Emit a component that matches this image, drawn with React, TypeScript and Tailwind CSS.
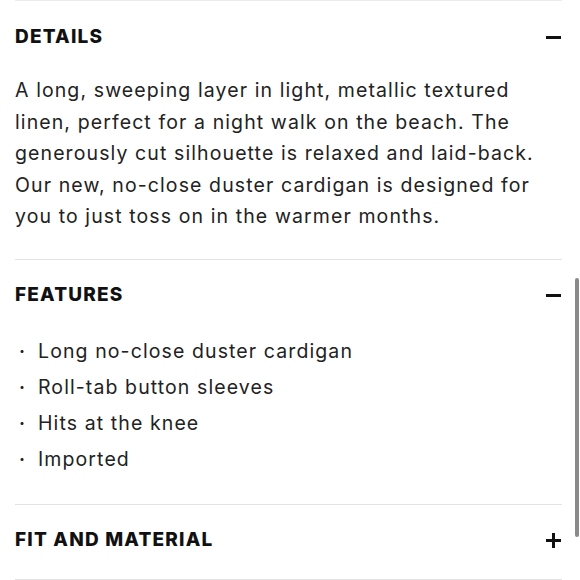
import React from "react";

function Minus() {
  return (
    <svg width="17" height="17" viewBox="0 0 17 17" className="text-[#111]">
      <rect x="1" y="7" width="15" height="3" fill="currentColor" />
    </svg>
  );
}

function Plus() {
  return (
    <svg width="17" height="17" viewBox="0 0 17 17" className="text-[#111]">
      <rect x="1" y="7" width="15" height="3" fill="currentColor" />
      <rect x="7" y="1" width="3" height="15" fill="currentColor" />
    </svg>
  );
}

function Header({ title, open }: { title: string; open: boolean }) {
  return (
    <div className="flex h-[74px] items-center justify-between pb-[2px]">
      <h2 className="text-[19px] font-extrabold tracking-[1.2px] text-[#111]">{title}</h2>
      {open ? <Minus /> : <Plus />}
    </div>
  );
}

const detailLines = [
  "A long, sweeping layer in light, metallic textured",
  "linen, perfect for a night walk on the beach. The",
  "generously cut silhouette is relaxed and laid-back.",
  "Our new, no-close duster cardigan is designed for",
  "you to just toss on in the warmer months.",
];

const features = [
  "Long no-close duster cardigan",
  "Roll-tab button sleeves",
  "Hits at the knee",
  "Imported",
];

export default function App() {
  return (
    <div
      className="relative h-[580px] w-[580px] overflow-hidden bg-white"
      style={{ fontFamily: "Inter, 'Noto Sans', sans-serif" }}
    >
      <div className="ml-[15px] w-[547px]">
        <section className="border-t border-[#ececec] pb-[26px]">
          <Header title="DETAILS" open />
          <p className="text-[19.5px] leading-[31.5px] tracking-[1.1px] text-[#222]">
            {detailLines.map((l) => (
              <span key={l} className="block whitespace-nowrap">
                {l}
              </span>
            ))}
          </p>
        </section>
        <section className="border-t border-[#e3e3e3] pb-[26px]">
          <Header title="FEATURES" open />
          <ul>
            {features.map((f) => (
              <li
                key={f}
                className="flex h-[36px] items-center text-[19.5px] tracking-[1.1px] text-[#222]"
              >
                <span className="w-[23px] pl-[4px] text-[18px] font-bold">·</span>
                {f}
              </li>
            ))}
          </ul>
        </section>
        <section className="border-y border-[#e3e3e3]">
          <Header title="FIT AND MATERIAL" open={false} />
        </section>
      </div>
      <div className="absolute left-[575px] top-[278px] h-[259px] w-[4px] rounded-full bg-[#8a8a8a]" />
    </div>
  );
}
